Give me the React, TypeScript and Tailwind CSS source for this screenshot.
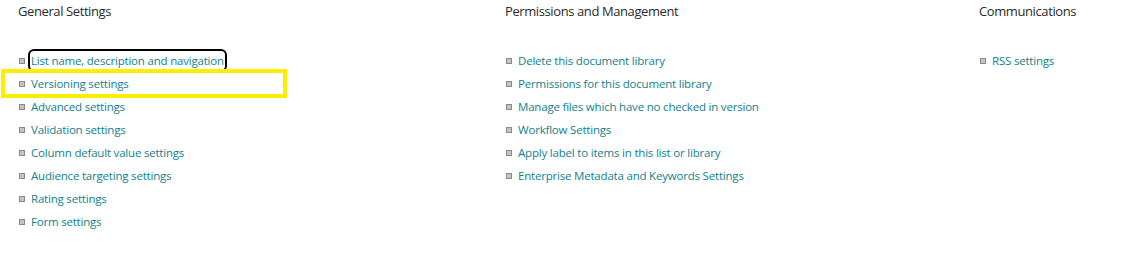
import React from 'react';

const COLUMNS = [
  {
    title: 'General Settings',
    width: 'w-[487px]',
    links: [
      'List name, description and navigation',
      'Versioning settings',
      'Advanced settings',
      'Validation settings',
      'Column default value settings',
      'Audience targeting settings',
      'Rating settings',
      'Form settings',
    ],
  },
  {
    title: 'Permissions and Management',
    width: 'w-[474px]',
    links: [
      'Delete this document library',
      'Permissions for this document library',
      'Manage files which have no checked in version',
      'Workflow Settings',
      'Apply label to items in this list or library',
      'Enterprise Metadata and Keywords Settings',
    ],
  },
  {
    title: 'Communications',
    width: 'flex-1',
    links: ['RSS settings'],
  },
];

function Bullet() {
  return <span className="inline-block ml-[1px] w-[6px] h-[6px] border border-[#8a8a8a] bg-[#c4c4c4] shrink-0" />;
}

export default function App() {
  return (
    <div className="w-[1137px] h-[272px] bg-white flex px-[18px] font-['Open_Sans',sans-serif]">
      {COLUMNS.map((col, ci) => (
        <div key={ci} className={col.width}>
          <h2 className="text-[13px] leading-[22px] text-[#2b2b2b] tracking-[-0.4px]">{col.title}</h2>
          <ul className="mt-[27px]">
            {col.links.map((link, i) => {
              const focused = ci === 0 && i === 0;
              const highlighted = ci === 0 && i === 1;
              return (
                <li
                  key={i}
                  className={`flex items-center gap-[6px] h-[23px] ${highlighted ? 'relative' : ''}`}
                >
                  {highlighted && (
                    <span className="absolute left-[-17px] top-[-3px] w-[286px] h-[29px] border-4 border-[#ffee00]" />
                  )}
                  <Bullet />
                  <a
                    href="#"
                    className={`text-[11.5px] text-[#127f8e] tracking-[-0.2px] leading-[17px] ${
                      focused ? 'outline outline-2 outline-offset-1 outline-black rounded-[3px]' : ''
                    }`}
                  >
                    {link}
                  </a>
                </li>
              );
            })}
          </ul>
        </div>
      ))}
    </div>
  );
}
